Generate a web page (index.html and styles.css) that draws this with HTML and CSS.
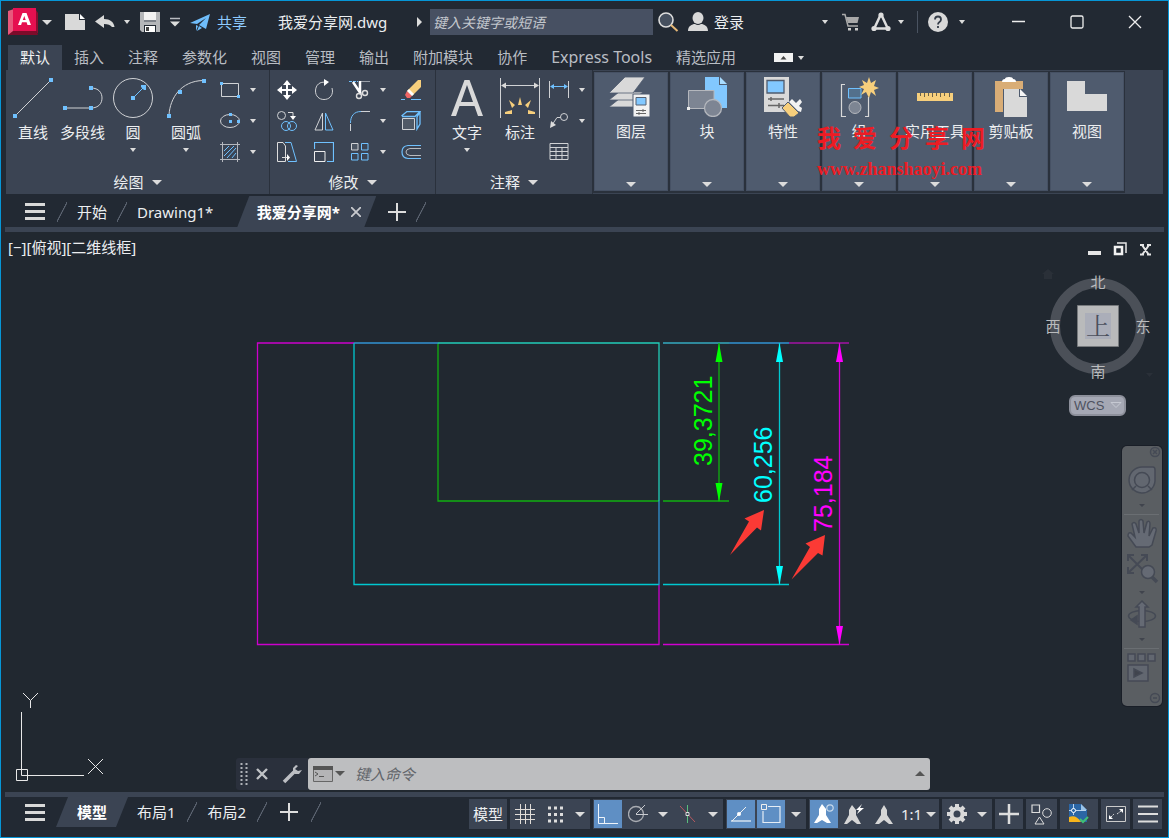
FILE: index.html
```html
<!DOCTYPE html>
<html lang="zh-CN">
<head>
<meta charset="utf-8">
<title>我爱分享网.dwg</title>
<link rel="stylesheet" href="styles.css">
</head>
<body>
<div class="window">
  <header class="titlebar">
    <button class="tb w30" aria-label="应用程序菜单"><svg width="30" height="28"><path d="M0 3L6 1V25L0 27Z" fill="#e8587c"/><path d="M5 0H28V23H5Z" fill="#e51050"/><path d="M28 2L30 5V26L28 23Z" fill="#8c0d30"/><path d="M0 27L5 23H28L30 27Z" fill="#7d0b2a"/><path d="M14.500 5H18.500L23 17H19.500L18.600 14.300H14L13.100 17H10ZM16.300 8L14.800 12H17.700Z" fill="#fff" fill-rule="evenodd"/></svg></button>
    <button class="tb w18" aria-label="菜单"><i class="caret mid"></i></button>
    <button class="tb w38" aria-label="新建"><svg width="20" height="16"><path d="M0 0H14V6H20V16H0Z" fill="#d9d9d9"/><path d="M15 0L20 5H15Z" fill="#fff"/></svg></button>
    <button class="tb w22" aria-label="放弃"><svg width="20" height="14"><path d="M0 6.500L9 0V4C15 4 19 7 19.500 12L17 12C15.500 10 13 9 9 9V13Z" fill="#d9d9d9"/></svg></button>
    <button class="tb w22" aria-label="放弃列表"><i class="caret"></i></button>
    <button class="tb w24" aria-label="保存"><svg width="20" height="20"><path d="M0 0H20V20H2L0 18Z" fill="#b4b6b9"/><path d="M4 0H16V8H4Z" fill="#f2f2f2"/><path d="M4 8H16V10H4Z" fill="#7e838b"/><path d="M4 13H16V20H4Z" fill="#222933"/><path d="M5 14H15V20H5Z" fill="#fff"/><path d="M6 15H9V19H6Z" fill="#444"/></svg></button>
    <button class="tb w26" aria-label="自定义快速访问"><svg width="10" height="10"><path d="M0 1.500H10" stroke="#b8bbc0" stroke-width="1.500"/><path d="M0 4.500H10L5 9.500Z" fill="#ddd"/></svg></button>
    <button class="tb share"><svg width="20" height="17"><path d="M0 9L20 0L16 15L9 11L16 4L7 10Z" fill="#6fbdfb"/><path d="M6 11L8 12L6 17Z M9 12L12 14L7 17Z" fill="#6fbdfb"/></svg><span>共享</span></button>
    <h1 class="doc-title">我爱分享网.dwg</h1>
    <button class="tb w22" aria-label="展开搜索"><svg width="6" height="10"><path d="M1 0V10L6 5Z" fill="#ddd"/></svg></button>
    <input class="search" type="text" aria-label="搜索" placeholder="键入关键字或短语">
    <button class="tb w30" aria-label="查找"><svg width="21" height="20"><circle cx="8" cy="8" r="7" fill="#46505f" stroke="#ddd" stroke-width="1.600"/><path d="M13 13L19.500 19" stroke="#e6b877" stroke-width="2"/></svg></button>
    <button class="tb login"><svg width="20" height="20"><ellipse cx="10" cy="6" rx="5.500" ry="6" fill="#d9d9d9"/><path d="M0 19C0 14 4 12 7 12Q10 14 13 12C16 12 20 14 20 19Z" fill="#d9d9d9"/></svg><span>登录</span></button>
    <div class="title-right">
      <button class="tb w16" aria-label="账户"><i class="caret"></i></button>
      <button class="tb w36" aria-label="购物车"><svg width="18" height="18"><path d="M0 1.500H3L6 13H16" fill="none" stroke="#aaa" stroke-width="1.500"/><path d="M4 4H17L15.500 10H6Z" fill="#a8a8a8"/><path d="M6 15H9V17.500H6ZM13 15H16V17.500H13Z" fill="#ccc"/></svg></button>
      <button class="tb w24" aria-label="应用商店"><svg width="20" height="20"><path d="M10 2L3 17M10 2L17 17M3 16.500H17" fill="none" stroke="#ddd" stroke-width="2.500"/><circle cx="10" cy="3" r="2.600" fill="#ddd"/><circle cx="3" cy="16.500" r="2.600" fill="#ddd"/><circle cx="17" cy="16.500" r="2.600" fill="#ddd"/></svg></button>
      <button class="tb w16" aria-label="应用列表"><i class="caret"></i></button>
      <span class="vline"></span>
      <button class="tb w24" aria-label="帮助"><svg width="20" height="20"><circle cx="10" cy="10" r="10" fill="#d9d9d9"/><path d="M7 7.500Q7 4.500 10 4.500T13 7.500Q13 9 11.500 10T10 12.500M10 14V16" fill="none" stroke="#333b47" stroke-width="1.800"/></svg></button>
      <button class="tb help-caret" aria-label="帮助列表"><i class="caret"></i></button>
      <button class="tb win" aria-label="最小化"><svg width="14" height="14"><path d="M0 6.500H13" stroke="#eee" stroke-width="1.500"/></svg></button>
      <button class="tb win" aria-label="最大化"><svg width="14" height="14"><rect x="1" y="1" width="12" height="12" rx="1.500" fill="none" stroke="#eee" stroke-width="1.300"/></svg></button>
      <button class="tb win" aria-label="关闭"><svg width="14" height="14"><path d="M1 1L13 13M13 1L1 13" stroke="#eee" stroke-width="1.300"/></svg></button>
    </div>
  </header>

  <nav class="ribbon-tabs">
    <button class="active">默认</button><button>插入</button><button>注释</button><button>参数化</button><button>视图</button><button>管理</button><button>输出</button><button>附加模块</button><button>协作</button><button class="latin">Express Tools</button><button>精选应用</button>
    <button class="toggle" aria-label="最小化功能区"><svg width="19" height="9"><path d="M0 0H19V9H0Z" fill="#f2f2f2"/><path d="M6.500 6.500L9.500 3L12.500 6.500Z" fill="#444"/></svg><i class="caret"></i></button>
  </nav>

  <section class="ribbon">
    <div class="panel">
      <div class="tools draw">
        <button class="big"><svg width="40" height="40"><path d="M2 38L38 2" stroke="#d0d2d5"/><path d="M0 36H4V40H0ZM36 0H40V4H36Z" fill="#6fc1ff"/></svg><span>直线</span></button>
        <button class="big"><svg width="40" height="40"><path d="M2 30H28M28 10C36 10 39 15 39 20S36 30 28 30" fill="none" stroke="#d0d2d5"/><path d="M0 28H4V32H0ZM26 28H30V32H26ZM26 8H30V12H26Z" fill="#6fc1ff"/></svg><span>多段线</span></button>
        <button class="big"><svg width="40" height="40"><circle cx="20" cy="20" r="19.500" fill="none" stroke="#d0d2d5"/><path d="M20 20L30 10" stroke="#6fc1ff"/><path d="M18 18H22V22H18ZM28 7H33V12L31 12L28 9Z" fill="#6fc1ff"/></svg><span>圆</span><i class="caret"></i></button>
        <button class="big"><svg width="40" height="40"><path d="M3 37C4 20 15 3 37 2.500" fill="none" stroke="#d0d2d5"/><path d="M1 36H5V40H1ZM12 12H16V16H12ZM36 1H40V5H36Z" fill="#6fc1ff"/></svg><span>圆弧</span><i class="caret"></i></button>
        <div class="small-grid shapes">
          <button aria-label="矩形"><svg width="20" height="20"><path d="M1.500 3.500H18.500V16.500H1.500Z" fill="none" stroke="#d0d2d5"/><path d="M0 2H3V5H0ZM17 15H20V18H17Z" fill="#6fc1ff"/></svg></button><button aria-label="矩形列表"><i class="caret"></i></button>
          <button aria-label="椭圆"><svg width="20" height="20"><ellipse cx="10" cy="10" rx="9.500" ry="6.500" fill="none" stroke="#d0d2d5"/><path d="M9 2H12V5H9ZM9 9H12V12H9ZM17 9H20V12H17Z" fill="#6fc1ff"/></svg></button><button aria-label="椭圆列表"><i class="caret"></i></button>
          <button aria-label="图案填充"><svg width="20" height="20"><path d="M2.500 0V20M17.500 0V20M0 2.500H20M0 17.500H20" stroke="#b4b7bd"/><path d="M4 9L9 4M4 14L14 4M7 16L16 6M12 16L16 11" stroke="#6fc1ff"/></svg></button><button aria-label="图案填充列表"><i class="caret"></i></button>
        </div>
      </div>
      <button class="panel-name">绘图<i class="caret mid"></i></button>
    </div>
    <div class="panel">
      <div class="tools">
        <div class="small-grid modify">
          <button aria-label="移动"><svg width="20" height="20"><path d="M10 2V18M2 10H18" stroke="#fff" stroke-width="2"/><path d="M10 0L14 5H6ZM10 20L14 15H6ZM0 10L5 6V14ZM20 10L15 6V14Z" fill="#fff"/></svg></button>
          <button aria-label="旋转"><svg width="20" height="22"><path d="M12 3.500C6 2 1.500 6 1.500 12C1.500 17 5 20.500 10 20.500S18.500 17 18.500 12L18 9" fill="none" stroke="#d0d2d5"/><path d="M10 0L15 3L10 7Z" fill="#fff"/></svg></button>
          <button aria-label="修剪"><svg width="22" height="20"><path d="M0 1.500H9" stroke="#6fc1ff" stroke-dasharray="3 1"/><path d="M12 1.500H21" stroke="#999fa8"/><path d="M4 2L12 14M11 1L11 13" stroke="#fff" stroke-width="2.500"/><circle cx="10" cy="16" r="2.500" fill="none" stroke="#ddd" stroke-width="1.400"/><circle cx="16" cy="13" r="2.500" fill="none" stroke="#ddd" stroke-width="1.400"/></svg></button>
          <button aria-label="修剪列表"><i class="caret"></i></button>
          <button aria-label="删除"><svg width="20" height="20"><path d="M0 19.500H4M10 19.500H20" stroke="#6fc1ff"/><path d="M20 0V7L11 16L6 11L17 0Z" fill="#f7cf7c"/><path d="M6 11L11 16L9 18L6 18L4 15Z" fill="#ef6565"/><path d="M8 9L13 14L11 16L6 11Z" fill="#fff"/></svg></button>
          <button aria-label="复制"><svg width="20" height="20"><circle cx="4.500" cy="4.500" r="4" fill="none" stroke="#d0d2d5"/><path d="M11 1.500H16V6" fill="none" stroke="#ddd"/><path d="M13 5H19L16 9Z" fill="#fff"/><circle cx="9" cy="15" r="4.500" fill="none" stroke="#6fc1ff"/><circle cx="15" cy="15" r="4.500" fill="none" stroke="#6fc1ff"/></svg></button>
          <button aria-label="镜像"><svg width="20" height="20"><path d="M8.500 2V19H1Z" fill="none" stroke="#d0d2d5"/><path d="M11.500 2V19H19Z" fill="none" stroke="#6fc1ff"/></svg></button>
          <button aria-label="圆角"><svg width="20" height="20"><path d="M.5 20V13M11 .5H20" stroke="#d0d2d5"/><path d="M.5 12C.5 5 4 .5 11 .5" fill="none" stroke="#6fc1ff"/></svg></button>
          <button aria-label="圆角列表"><i class="caret"></i></button>
          <button aria-label="分解"><svg width="20" height="20"><path d="M1.500 7.500H13.500V18.500H1.500Z" fill="#505966" stroke="#d0d2d5"/><path d="M.5 5L6 .5H19L14 5.500H1M19 .500V13L16 18V6L19 1" fill="none" stroke="#6fc1ff" stroke-width="1.300"/></svg></button>
          <button aria-label="拉伸"><svg width="20" height="20"><path d="M6 .5H.5V19.500H8.500V4L6 .5M5 15.500H11" fill="none" stroke="#ddd"/><path d="M10 12V19L13 15.500Z" fill="#fff"/><path d="M8 .500H14L19.500 19.500H11" fill="none" stroke="#6fc1ff"/></svg></button>
          <button aria-label="缩放"><svg width="20" height="20"><path d="M.5 7V.5H19.500V19.500H13" fill="none" stroke="#6fc1ff" stroke-width="1.200"/><path d="M.5 9.500H11V19.500H.5Z" fill="none" stroke="#eee"/></svg></button>
          <button aria-label="阵列"><svg width="20" height="20"><path d="M1.500 1.500H8V8H1.500Z" fill="#4c5562" stroke="#d0d2d5"/><path d="M11.500 1.500H18V8H11.500ZM1.500 11.500H8V18H1.500ZM11.500 11.500H18V18H11.500Z" fill="none" stroke="#6fc1ff"/></svg></button>
          <button aria-label="阵列列表"><i class="caret"></i></button>
          <button aria-label="偏移"><svg width="20" height="20"><path d="M20 3.500H7Q1 4 1 10T7 16.500H20" fill="none" stroke="#6fc1ff" stroke-width="1.200"/><path d="M20 6.500H9Q5 7 5 10T9 13.500H20" fill="none" stroke="#b8bbc0"/></svg></button>
        </div>
      </div>
      <button class="panel-name">修改<i class="caret mid"></i></button>
    </div>
    <div class="panel">
      <div class="tools annotate">
        <button class="big"><svg width="40" height="40"><path d="M4 38L17.500 2H22.500L36 38H31L27.500 28H12.500L9 38ZM14 24H26L20 7Z" fill="#d9d9d9" fill-rule="evenodd"/></svg><span>文字</span><i class="caret"></i></button>
        <button class="big"><svg width="40" height="40"><path d="M.5 0V40M39.500 0V40M2 7.500H38" stroke="#d0d2d5"/><path d="M1 7.500L6 4.500V10.500ZM39 7.500L34 4.500V10.500Z" fill="#d9d9d9"/><path d="M18 27L20 19L22 27ZM9 22L15 27L12 30ZM31 22L25 27L28 30ZM5 34L12 32V36H5ZM35 34L28 32V36H35Z" fill="#f7cf7c"/></svg><span>标注</span></button>
        <div class="small-grid dims">
          <button aria-label="线性标注"><svg width="20" height="20"><path d="M.5 1V18M19.500 1V18" stroke="#d0d2d5"/><path d="M2 6.500H18" stroke="#6fc1ff"/><path d="M1 6.500L5 4V9ZM19 6.500L15 4V9Z" fill="#6fc1ff"/></svg></button><button aria-label="标注列表"><i class="caret"></i></button>
          <button aria-label="引线"><svg width="20" height="20"><circle cx="15" cy="6" r="3.500" fill="none" stroke="#d0d2d5"/><path d="M11.500 6.500H8L3 14" fill="none" stroke="#d0d2d5"/><path d="M1 17L2 10L7 14Z" fill="#ddd"/></svg></button><button aria-label="引线列表"><i class="caret"></i></button>
          <button aria-label="表格"><svg width="20" height="20"><path d="M1 1.500H19V17.500H1ZM1 5.500H19M1 9.500H19M1 13.500H19M7 6V17M13 6V17" fill="none" stroke="#d0d2d5"/></svg></button>
        </div>
      </div>
      <button class="panel-name">注释<i class="caret mid"></i></button>
    </div>

    <button class="collapsed"><svg width="44" height="40"><g stroke="#4f5b6e" stroke-width=".8" fill="#d9d9d9"><path d="M0 30L10 22H34L24 30Z"/><path d="M0 23L10 15H34L24 23Z"/><path d="M0 16L16 0H36L24 16Z"/></g><path d="M24 17H41V40H24Z" fill="#f2f2f2" stroke="#4f5b6e"/><path d="M27 20.500H37V28H27Z" fill="#82c8ff" stroke="#566070"/><path d="M27 33.500H37M27 36.500H37M34 32V35M30 35V38" stroke="#666"/></svg><span>图层</span><i class="caret mid"></i></button>
    <button class="collapsed"><svg width="40" height="40"><path d="M18 0H32V8H40V31H18Z" fill="#82c8ff"/><path d="M33 0L40 7H33Z" fill="#a9dcff"/><path d="M1.500 13.500H27V31.500H1.500Z" fill="#7d8593" stroke="#b4b7bd"/><circle cx="26" cy="31" r="8.500" fill="#7d8593" stroke="#b4b7bd" stroke-width="1.300"/><path d="M0 30H3V33H0Z" fill="#eee"/></svg><span>块</span><i class="caret mid"></i></button>
    <button class="collapsed"><svg width="40" height="40"><path d="M1 0H26V35H1Z" fill="#d9d9d9"/><path d="M4 3.500H21V16H4Z" fill="#82c8ff" stroke="#4f5b6e" stroke-width="1.300"/><path d="M5 22H21M5 28.500H21M8 20V24M16 26V31" stroke="#666" stroke-width="1.500"/><path d="M19 31L25 25L36 36L31 40H27Z" fill="#f7cf7c" stroke="#4f5b6e"/><path d="M26 25L29 22L33 26L37 22L39 25L36 29L39 31L38 35L35 34Z" fill="#f2f2f2"/></svg><span>特性</span><i class="caret mid"></i></button>
    <button class="collapsed"><svg width="40" height="40"><path d="M6 7.500H2.500V39.500H7M26 39.500H29.500V20" fill="none" stroke="#d9d9d9" stroke-width="1.200"/><path d="M9.500 11.500H22V21H9.500Z" fill="#53708c" stroke="#6fc1ff"/><circle cx="16" cy="30.500" r="6" fill="#7d8593" stroke="#b4b7bd"/><path d="M30 0L32 6L37 3L35 9L40 11L35 13L37 19L32 15L30 21L27 15L22 18L25 12L20 10L25 8L23 3L28 6Z" fill="#f7cf7c"/></svg><span>组</span><i class="caret mid"></i></button>
    <button class="collapsed"><svg width="40" height="40"><path d="M2 16H38V24H2Z" fill="#f7cf7c"/><path d="M5.500 16V19M9.500 16V20M13.500 16V19M17.500 16V20M21.500 16V19M25.500 16V20M29.500 16V19M34.500 16V20" stroke="#6a614a"/></svg><span>实用工具</span><i class="caret mid"></i></button>
    <button class="collapsed"><svg width="40" height="40"><path d="M4 4H32V12H12V35H4Z" fill="#d9ad76"/><path d="M11 5Q11 2 14 2Q14 0 18 0T22 2Q25 2 25 5Z" fill="#fff"/><path d="M13 12H28V20H36V40H13Z" fill="#d9d9d9"/><path d="M29 12L36 19H29Z" fill="#f6f6f6"/></svg><span>剪贴板</span><i class="caret mid"></i></button>
    <button class="collapsed"><svg width="40" height="40"><path d="M0 4H18V17H40V34H0Z" fill="#d9d9d9"/></svg><span>视图</span><i class="caret mid"></i></button>
    <div class="watermark"><div class="wm-name">我&nbsp;&nbsp;爱&nbsp;&nbsp;分&nbsp;&nbsp;享&nbsp;&nbsp;网</div><div class="wm-url">www.zhanshaoyi.com</div></div>
  </section>

  <nav class="tabs file-tabs">
    <button class="menu" aria-label="文件菜单"><i></i><i></i><i></i></button>
    <span class="slash"></span><button>开始</button><span class="slash"></span><button>Drawing1*</button>
    <div class="current"><button>我爱分享网*</button><button class="tab-x" aria-label="关闭选项卡"><svg width="10" height="10"><path d="M0 0L10 10M10 0L0 10" stroke="#c8cace" stroke-width="1.800"/></svg></button></div>
    <button class="plus" aria-label="新建图形"><svg width="18" height="18"><path d="M9 0V18M0 9H18" stroke="#ddd" stroke-width="2"/></svg></button><span class="slash"></span>
  </nav>
  <div class="stripe"></div>

  <main class="canvas">
    <svg class="drawing" role="img" aria-label="图形">
      <g transform="translate(-1 -232)">
        <g fill="none" stroke-width="1.300">
          <path d="M354 343H257.500V644.500H659V585" stroke="#cc00cc"/>
          <path d="M354 343V584.500H659" stroke="#00c8d0"/>
          <path d="M438 343V501H659" stroke="#10b010"/>
          <path d="M354 343H438M659 501V585M729 343H789" stroke="#3292d2"/>
          <path d="M438 343H659V501" stroke="#22ccb8"/>
          <path d="M663 343H729" stroke="#34aabf"/>
          <path d="M789 343H849" stroke="#a313a5"/>
          <path d="M663 501H729M719 343V501" stroke="#10b010"/>
          <path d="M663 584.500H789M779.500 343V584" stroke="#00c8d0"/>
          <path d="M663 644.500H849M839.500 343V644" stroke="#d000d0"/>
        </g>
        <path d="M719 343L722.500 362H715.500ZM719 502L722.500 483H715.500Z" fill="#0f0"/>
        <path d="M779.500 343L783 362H776ZM779.500 585L783 566H776Z" fill="#0ff"/>
        <path d="M839.500 343L843 362H836ZM839.500 645L843 626H836Z" fill="#f0f"/>
        <g class="dim">
          <text transform="translate(712 466) rotate(-90)" fill="#0f0">39,3721</text>
          <text transform="translate(772 503) rotate(-90)" fill="#0ff">60,256</text>
          <text transform="translate(832 532) rotate(-90)" fill="#f0f">75,184</text>
        </g>
        <path d="M764 510L761 530.500L757 527.500L730 555L749 521.500L744.500 518.500ZM825 535L822.500 555.500L818 553L791.500 579.500L810 547L805.500 543.500Z" fill="#fb3a35"/>
        <path d="M21.500 712V775.500H84M16.500 769.500H27.500V780.500H16.500ZM23 693L30.500 700.500L38 693M30.500 700.500V708M88 759L103 774M103 759L88 774" fill="none" stroke="#e8e8e8"/>
      </g>
    </svg>
    <div class="view-label">[−][俯视][二维线框]</div>
    <div class="view-controls">
      <button aria-label="最小化视口"><svg width="13" height="13"><path d="M0 8H13V12H0Z" fill="#e6e6e6"/></svg></button>
      <button aria-label="还原视口"><svg width="14" height="14"><path d="M4 1H13V11" fill="none" stroke="#e6e6e6" stroke-width="1.500"/><path d="M2 5H9V12H2Z" fill="none" stroke="#f2f2f2" stroke-width="2.500"/></svg></button>
      <button aria-label="关闭视口"><svg width="13" height="13"><path d="M1 2H5M8 2H12M1 11.500H5M8 11.500H12M3 2L10 12M10 2L3 12" stroke="#e6e6e6" stroke-width="2"/></svg></button>
    </div>
    <svg class="viewcube" width="112" height="112" role="img" aria-label="上视图">
      <path d="M-1 5L5 0L11 5H9V10H1V5Z" fill="#2a3038"/>
      <circle cx="55" cy="57" r="43" fill="none" stroke="#4b5058" stroke-width="10"/>
      <path d="M34.500 36.500H75.500V77.500H34.500Z" fill="#b9babb" stroke="#777a7d"/>
      <path d="M42 44H68V70H42Z" fill="#abaeb9"/>
      <path d="M103 104L110 104L106.500 108Z" fill="#2a3038"/>
      <g class="compass"><text x="55" y="19">北</text><text x="10" y="63">西</text><text x="100" y="63">东</text><text x="55" y="108">南</text></g>
      <text class="top-face" x="55" y="66">上</text>
    </svg>
    <button class="wcs">WCS<svg width="12" height="7"><path d="M1 .5H11L6 5.500Z" fill="none" stroke="#c6c9d2"/></svg></button>
    <div class="navbar" role="toolbar" aria-label="导航栏">
      <svg width="40" height="260" fill="none" stroke="#454a55" stroke-width="1.500">
        <circle cx="33" cy="6" r="4.500"/><path d="M31 4L35 8M35 4L31 8"/>
        <path d="M20 21H31Q33 21 33 24V35A13 13 0 1 1 20 21Z" fill="#626770"/><circle cx="20" cy="34" r="7.500"/><path d="M14 40L10 44M26 40L30 44"/>
        <path d="M17 58H23L20 61ZM17 145H23L20 148ZM17 192H23L20 195Z" fill="#40444d" stroke="none"/>
        <path d="M2 68.500H37M2 202.500H37" stroke="#6a6e72" stroke-width="1"/>
        <path d="M14 101L6 90Q6 86 9 87L13 91L10 78Q12 75 14 78L17 87L17 75Q19 72 21 75L22 87L25 76Q28 74 28 78L27 90L31 82Q35 81 34 85L30 99L27 101Z" fill="#656a74"/>
        <path d="M6 109L25 128M25 109L6 127M6 115V109H12M19 109H25V115M6 121V127H12" stroke-width="2"/><circle cx="26" cy="126" r="6.500" fill="#656a74"/><path d="M30 131L35 136" stroke-width="3.500"/>
        <ellipse cx="20" cy="170" rx="13.500" ry="5.500"/><path d="M17 181V161H14L20 155L26 161H23V181Z" fill="#656a74"/><path d="M9 174L15 170V178Z" fill="#454a55"/>
        <path d="M6 208H13V215H6ZM16 208H23V215H16ZM26 208H33V215H26ZM6 219H26V235H6Z" fill="#626770"/><path d="M12 223L20 227L12 231Z" fill="#40444d"/>
        <circle cx="33" cy="252" r="4.500"/><path d="M31 252H35"/>
      </svg>
    </div>
    <div class="command">
      <div class="cmd-tools">
        <svg width="8" height="22"><path d="M1.500 0V22M6.500 0V22" stroke="#aeb1b7" stroke-width="2" stroke-dasharray="2 2"/></svg>
        <button aria-label="关闭命令行"><svg width="12" height="12"><path d="M1 1L11 11M11 1L1 11" stroke="#c0c2c6" stroke-width="2.400"/></svg></button>
        <button aria-label="自定义"><svg width="20" height="20"><path d="M2 18L12 8" stroke="#bcbec3" stroke-width="3.500"/><path d="M14 1L11 4V8L13 10H17L20 6L16 7L13 5L16 2Z" fill="#bcbec3"/></svg></button>
      </div>
      <div class="cmd-field">
        <button aria-label="最近使用的命令"><svg width="32" height="18"><path d="M.5 1.500H19.500V16.500H.5Z" fill="#b4b4b6" stroke="#666"/><path d="M0 1H20V5H0Z" fill="#555"/><path d="M2 7L5 9L2 11M6 11.500H11" fill="none" stroke="#555"/><path d="M22 6H32L27 11Z" fill="#555"/></svg></button>
        <input type="text" aria-label="命令" placeholder="键入命令">
        <button aria-label="命令历史"><svg width="10" height="6"><path d="M0 5L5 0L10 5Z" fill="#555"/></svg></button>
      </div>
    </div>
  </main>
  <div class="stripe"></div>

  <footer class="status">
    <nav class="tabs layout-tabs">
      <button class="menu" aria-label="布局菜单"><i></i><i></i><i></i></button>
      <div class="current"><button>模型</button></div>
      <button>布局1</button><span class="slash"></span><button>布局2</button><span class="slash"></span>
      <button class="plus" aria-label="新建布局"><svg width="18" height="18"><path d="M9 0V18M0 9H18" stroke="#ddd" stroke-width="2"/></svg></button><span class="slash"></span>
    </nav>
    <div class="status-tools">
      <div class="group"><button class="model">模型</button></div>
      <div class="group">
        <button aria-label="栅格"><svg width="20" height="20"><path d="M5.500 0V20M10.500 0V20M15.500 0V20M0 5.500H20M0 10.500H20M0 15.500H20" stroke="#e0dcd8"/></svg></button>
        <button aria-label="捕捉"><svg width="20" height="20"><path d="M3 4H18M3 10.500H18M3 17H18" stroke="#ddd" stroke-width="3" stroke-dasharray="3 3"/></svg></button>
        <button class="drop" aria-label="捕捉列表"><i class="caret mid"></i></button>
      </div>
      <div class="group">
        <button class="on" aria-label="正交"><svg width="20" height="20"><path d="M.5 0V19.500H20M.5 13.500H6.500V19" fill="none" stroke="#eef4fa"/></svg></button>
        <button aria-label="极轴"><svg width="20" height="20"><circle cx="8" cy="10" r="7.500" fill="none" stroke="#a9acb2" stroke-width="1.300"/><path d="M8 10.500H20M8 10L17 1" stroke="#c9cbd0"/></svg></button>
        <button class="drop" aria-label="极轴列表"><i class="caret mid"></i></button>
        <button aria-label="等轴测"><svg width="20" height="20"><path d="M2 2L17 18" stroke="#b75960"/><path d="M9.500 1V19" stroke="#59bd7c"/><path d="M8 8.500H11V11.500H8Z" fill="#3b4453" stroke="#ddd"/></svg></button>
        <button class="drop" aria-label="等轴测列表"><i class="caret mid"></i></button>
      </div>
      <div class="group">
        <button class="on" aria-label="捕捉追踪"><svg width="20" height="20"><path d="M0 17H20" stroke="#b5cce4" stroke-width="2"/><path d="M1 17L15 3" stroke="#eee"/><circle cx="8" cy="10" r="2" fill="#fff"/></svg></button>
        <button class="on" aria-label="对象捕捉"><svg width="20" height="20"><path d="M7 2.500H19V18.500H2V7" fill="none" stroke="#e5edf5" stroke-width="1.200"/><path d="M.5 .5H5.500V5.500H.5Z" fill="none" stroke="#eee"/></svg></button>
        <button class="drop" aria-label="对象捕捉列表"><i class="caret mid"></i></button>
      </div>
      <div class="group">
        <button class="on" aria-label="注释可见性"><svg width="20" height="20"><path d="M8 0L5 5V11L0 19H3L8 16L13 19H17L12 11V5Z" fill="#fff"/><circle cx="16" cy="4" r="3.200" fill="none" stroke="#c6d8ea" stroke-width="1.200"/></svg></button>
        <button aria-label="自动缩放"><svg width="20" height="20"><path d="M8 1L5 6V11L0 20H3L8 16L13 20H17L12 11V6Z" fill="#d6d6d6"/><path d="M18 0L12 6H15L13 10L20 4H16Z" fill="#fff"/></svg></button>
        <button aria-label="注释比例"><svg width="20" height="20"><path d="M10 1L7 6V11L1 20H5L10 16L15 20H19L13 11V6Z" fill="#d6d6d6"/></svg></button>
        <button class="ratio">1:1<i class="caret mid"></i></button>
      </div>
      <div class="group">
        <button aria-label="切换工作空间"><svg width="20" height="20"><g stroke="#d9d9d9" stroke-width="4"><path d="M10 0V20M0 10H20M3 3L17 17M17 3L3 17"/></g><circle cx="10" cy="10" r="7.500" fill="#d9d9d9"/><circle cx="10" cy="10" r="3.500" fill="#3b4453"/></svg></button>
        <button class="drop" aria-label="工作空间列表"><i class="caret mid"></i></button>
      </div>
      <div class="group"><button class="w28" aria-label="注释监视器"><svg width="20" height="20"><path d="M10 0V20M0 10H20" stroke="#ddd" stroke-width="2.500"/></svg></button></div>
      <div class="group"><button class="w31" aria-label="隔离对象"><svg width="21" height="21"><path d="M1 1H8.500V8.500H1Z" fill="none" stroke="#ddd" stroke-width="1.200"/><circle cx="16" cy="9" r="4.300" fill="none" stroke="#ddd"/><path d="M8.500 13L13 20H4Z" fill="none" stroke="#ddd"/></svg></button></div>
      <div class="group"><button class="w38" aria-label="硬件加速"><svg width="20" height="20"><path d="M0 0H12L18 6V18H0Z" fill="#2b66a5"/><path d="M12 0L18 6H12Z" fill="#9bc4e8"/><path d="M0 13Q7 10 12 18H0Z" fill="#f7b51c"/><path d="M0 6.500H17M4.500 0V11" stroke="#b9d3ed"/><circle cx="4.500" cy="6.500" r="2" fill="#2b66a5" stroke="#fff"/><path d="M11 15L14 18L19 13" fill="none" stroke="#3fc076" stroke-width="2"/></svg></button></div>
      <div class="group"><button class="w29" aria-label="全屏显示"><svg width="20" height="16"><path d="M.5 .5H19.500V15.500H.5Z" fill="none" stroke="#ccc"/><path d="M13 3H17V7ZM3 9V13H7Z" fill="#fff"/><path d="M15 5L11 8M5 11L8 8" stroke="#ddd" stroke-dasharray="2 1"/></svg></button></div>
      <div class="group"><button class="w29" aria-label="自定义"><svg width="20" height="20"><path d="M0 2.500H20M0 10H20M0 17.500H20" stroke="#ddd" stroke-width="2"/></svg></button></div>
    </div>
  </footer>
</div>
</body>
</html>
```

FILE: styles.css
```css
* { box-sizing: border-box; }
body { margin: 0; background: #222933; color: #eceef0; font: 15px/20px "Noto Sans", "Noto Sans CJK SC", sans-serif; }
button { margin: 0; padding: 0; border: 0; background: none; color: inherit; font: inherit; white-space: nowrap; }
svg { display: block; flex: none; }
.window { display: flex; flex-direction: column; min-height: 100vh; border: 1px solid #0696d7; }

.caret { width: 0; height: 0; border: 3px solid transparent; border-top: 4px solid #dcdcdc; border-bottom: 0; flex: none; }
.caret.mid { border-width: 5px 5px 0; }

/* title bar */
.titlebar { display: flex; align-items: center; height: 44px; padding: 0 0 2px 7px; }
.tb { display: flex; align-items: center; justify-content: center; flex: none; height: 30px; }
.w16 { width: 16px; } .w18 { width: 18px; } .w22 { width: 22px; } .w24 { width: 24px; } .w26 { width: 26px; }
.w30 { width: 30px; } .w36 { width: 36px; } .w38 { width: 38px; }
.share { gap: 7px; padding-left: 2px; color: #8ecbff; }
.doc-title { width: 130px; margin: 0 0 0 31px; font-size: 15px; font-weight: 400; white-space: nowrap; }
.search { width: 223px; height: 26px; padding: 0 3px; border: 0; background: #475062; color: #eee; font: italic 14px "Noto Sans", "Noto Sans CJK SC", sans-serif; }
.search::placeholder { color: #c3c7cd; opacity: 1; }
.login { gap: 6px; padding-left: 5px; }
.title-right { display: flex; align-items: center; margin-left: auto; padding-right: 4px; }
.vline { width: 1px; height: 22px; margin: 0 8px; background: #4a5361; }
.help-caret { width: 24px; margin-right: 16px; }
.win { width: 58px; }

/* ribbon tabs */
.ribbon-tabs { display: flex; height: 25px; padding-left: 7px; color: #b9bdc3; }
.ribbon-tabs button { padding: 0 12px 2px; }
.ribbon-tabs .latin { font-size: 16px; }
.ribbon-tabs .active { background: #3b4453; color: #f2f3f4; }
.ribbon-tabs .toggle { display: flex; align-items: center; gap: 5px; margin-left: auto; margin-right: 352px; padding-bottom: 0; }

/* ribbon */
.ribbon { display: flex; position: relative; height: 124px; margin: 0 5px; background: #3b4453; }
.panel { display: flex; flex-direction: column; border-right: 1px solid #2a313c; }
.tools { display: flex; flex: 1; }
.tools button { display: flex; align-items: center; justify-content: center; }
.tools .big { flex-direction: column; justify-content: flex-start; padding-top: 8px; }
.big span { margin: 4px 0 6px; }
.draw { padding: 0 8px 0 4px; }
.draw .big:nth-child(1) { width: 46px; }
.draw .big:nth-child(2) { width: 53px; }
.draw .big:nth-child(3) { width: 48px; }
.draw .big:nth-child(4) { width: 58px; }
.annotate { padding-left: 4px; }
.annotate .big:nth-child(1) { width: 54px; }
.annotate .big:nth-child(2) { width: 52px; }
.small-grid { display: grid; grid-auto-rows: 31px; padding-top: 4px; }
.shapes { grid-template-columns: 30px 16px; }
.modify { grid-template-columns: 34px 40px 32px 14px 45px; }
.modify button:nth-child(5n) { padding-right: 4px; }
.dims { grid-template-columns: 26px 20px; }
.panel-name { display: flex; align-items: center; justify-content: center; gap: 8px; height: 24px; }
.collapsed { display: flex; flex-direction: column; align-items: center; width: 76px; height: 122px; margin-top: 1px; padding: 5px 0 4px; border: 1px solid #2a313c; border-width: 1px 1px 2px; background: #4f5b6e; box-shadow: inset 0 0 0 1px #465164; }
.collapsed span { margin-top: 4px; }
.collapsed .caret { margin-top: auto; }
.watermark { position: absolute; left: 811px; top: 54px; color: #ed1c24; font-family: "Liberation Serif", "Noto Sans CJK SC", serif; font-weight: 700; white-space: nowrap; }
.wm-name { font-size: 24px; line-height: 30px; }
.wm-url { font-size: 18px; line-height: 30px; }

/* slanted tabs */
.tabs { display: flex; align-items: center; }
.menu { display: flex; flex-direction: column; justify-content: space-between; width: 20px; height: 17px; flex: none; }
.menu i { width: 20px; height: 3px; background: #d9d9d9; }
.slash { width: 10px; height: 20px; margin: 0 10px; flex: none; background: linear-gradient(117deg, transparent 46%, #59616e 47%, #59616e 53%, transparent 54%); }
.current { display: flex; align-items: center; justify-content: center; align-self: stretch; gap: 11px; background: #3b4453; clip-path: polygon(12px 0, 100% 0, calc(100% - 12px) 100%, 0 100%); font-weight: 700; color: #fff; }
.file-tabs { height: 33px; padding: 2px 0 0 24px; }
.file-tabs .menu + .slash { margin-left: 12px; }
.file-tabs .current { width: 139px; margin: 0 12px 0 24px; padding-left: 4px; }
.stripe { height: 5px; margin: 0 4px; background: #3b4453; flex: none; }

/* drawing area */
.canvas { position: relative; flex: 1; min-height: 520px; background: #212830; }
.drawing { position: absolute; inset: 0; width: 100%; height: 100%; }
.dim { font: 25px "Liberation Sans", sans-serif; }
.view-label { position: absolute; left: 7px; top: 5px; }
.view-controls { position: absolute; right: 16px; top: 10px; display: flex; gap: 12px; }
.viewcube { position: absolute; right: 13px; top: 37px; overflow: visible; }
.compass { font: 15px "Noto Sans CJK SC", sans-serif; fill: #b9bbbd; text-anchor: middle; }
.top-face { font: 24px "Noto Serif CJK SC", "Noto Sans CJK SC", serif; fill: #4a4e5c; text-anchor: middle; }
.wcs { position: absolute; right: 42px; top: 163px; display: flex; align-items: center; justify-content: space-between; width: 57px; height: 21px; padding: 0 2px 0 3px; border: 2px solid #8d909b; border-radius: 6px; background: #a5a8b4; color: #4e5260; font: 13px "Liberation Sans", sans-serif; }
.navbar { position: absolute; right: 6px; top: 214px; border-radius: 5px; background: #5a5e62; box-shadow: 0 0 0 1px #191e27; }
.command { position: absolute; left: 235px; right: 238px; bottom: 2px; display: flex; height: 32px; }
.cmd-tools { display: flex; align-items: center; gap: 8px; width: 72px; padding-left: 4px; background: #2a303c; border-radius: 3px 0 0 3px; flex: none; }
.cmd-tools button:last-child { margin-left: 6px; }
.cmd-field { display: flex; align-items: center; flex: 1; padding: 0 5px; border-radius: 3px; background: #bdbec0; }
.cmd-field input { flex: 1; min-width: 0; height: 30px; padding: 0 10px; border: 0; background: none; color: #333; font: italic 15px "Noto Sans", "Noto Sans CJK SC", sans-serif; }
.cmd-field input::placeholder { color: #62656a; opacity: 1; }

/* status bar */
.status { display: flex; justify-content: space-between; height: 40px; flex: none; }
.layout-tabs { height: 30px; padding-left: 24px; }
.layout-tabs .current { width: 72px; margin: 0 9px 0 11px; }
.layout-tabs .slash { margin: 0 11px; }
.layout-tabs .plus { margin: 0 2px; }
.status-tools { display: flex; gap: 3px; padding: 2px 6px 0 0; }
.group { display: flex; height: 30px; background: #3b4453; }
.group button { display: flex; align-items: center; justify-content: center; width: 30px; height: 30px; }
.group .on { background: #5f8fc4; border: 1px solid #3b4453; }
.group .drop { width: 20px; }
.group .model { width: 38px; }
.group .ratio { justify-content: flex-start; width: 40px; gap: 4px; padding-left: 2px; }
.group .w28 { width: 28px; } .group .w29 { width: 29px; } .group .w31 { width: 31px; } .group .w38 { width: 38px; }
```
